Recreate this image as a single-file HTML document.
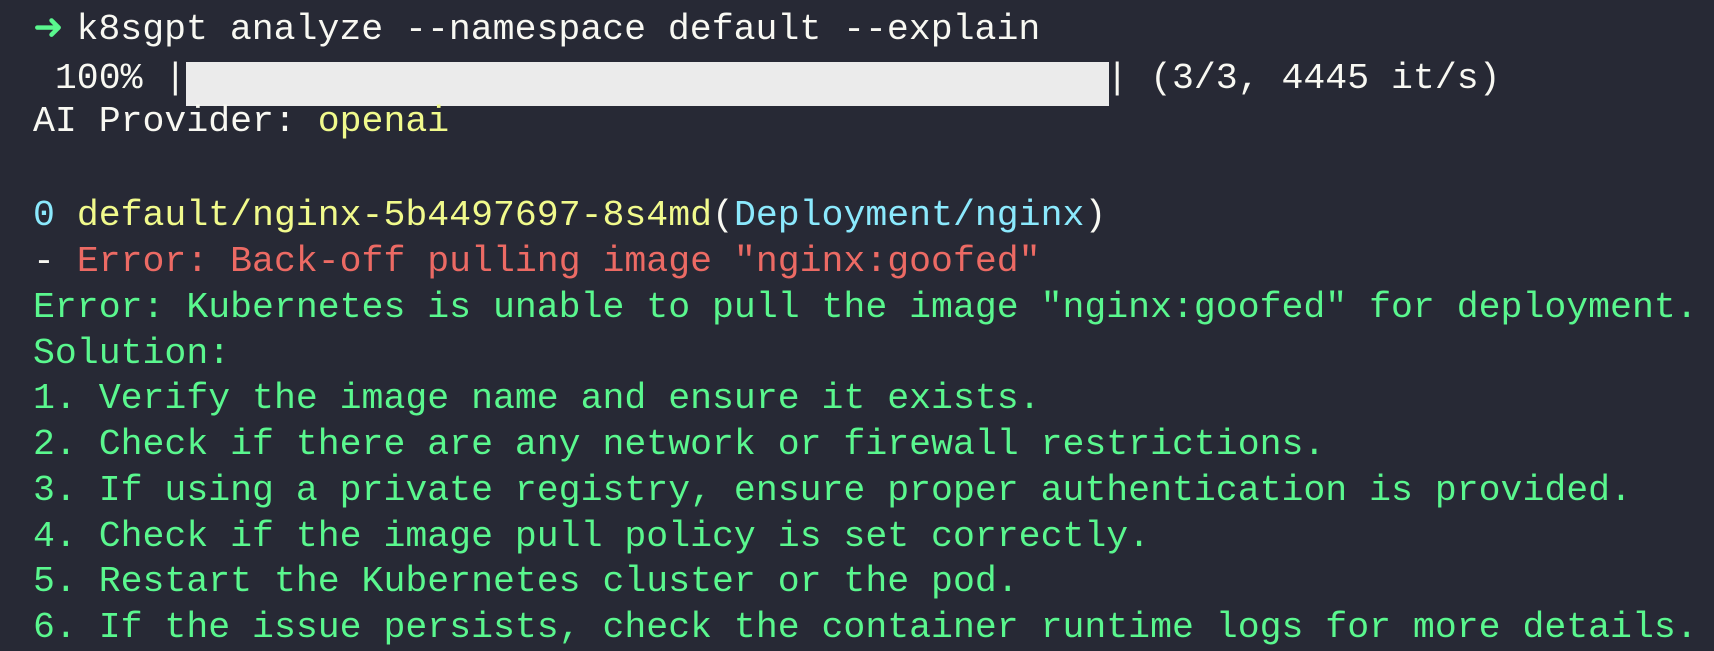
<!DOCTYPE html>
<html><head><style>
html,body{margin:0;padding:0;background:#272935;width:1714px;height:650px;overflow:hidden}
.l{position:absolute;left:33px;height:46px;line-height:46px;font-family:"Liberation Mono",monospace;font-size:36.5px;color:#f8f8f2;white-space:pre;letter-spacing:0}
.g{color:#5af78e}.y{color:#f1fa8c}.c{color:#8be9fd}.r{color:#ec6a64}
.bar{position:absolute;left:186px;top:62px;width:923px;height:44px;background:#ebebeb}
.ar{display:inline-block;width:43.5px;overflow:hidden;vertical-align:top}
</style></head><body>
<div class="l" style="top:7px"><span class="g ar">➜</span>k8sgpt analyze --namespace default --explain</div>
<div class="l" style="top:56px"> 100% |                                          | (3/3, 4445 it/s)</div>
<div class="bar"></div>
<div class="l" style="top:99px">AI Provider: <span class="y">openai</span></div>
<div class="l" style="top:193px"><span class="c">0</span> <span class="y">default/nginx-5b4497697-8s4md</span>(<span class="c">Deployment/nginx</span>)</div>
<div class="l" style="top:239px">- <span class="r">Error: Back-off pulling image "nginx:goofed"</span></div>
<div class="l g" style="top:285px">Error: Kubernetes is unable to pull the image "nginx:goofed" for deployment.</div>
<div class="l g" style="top:331px">Solution:</div>
<div class="l g" style="top:376px">1. Verify the image name and ensure it exists.</div>
<div class="l g" style="top:422px">2. Check if there are any network or firewall restrictions.</div>
<div class="l g" style="top:468px">3. If using a private registry, ensure proper authentication is provided.</div>
<div class="l g" style="top:514px">4. Check if the image pull policy is set correctly.</div>
<div class="l g" style="top:559px">5. Restart the Kubernetes cluster or the pod.</div>
<div class="l g" style="top:605px">6. If the issue persists, check the container runtime logs for more details.</div>
</body></html>
